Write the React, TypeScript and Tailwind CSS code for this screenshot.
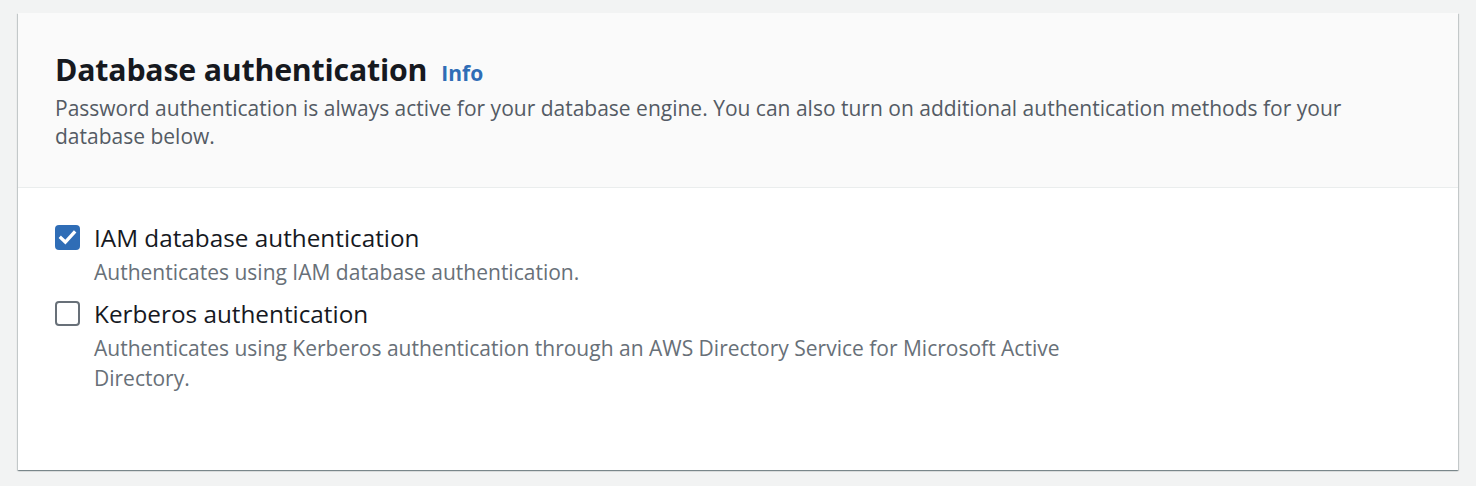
import { useState } from "react";

function Checkbox({ checked, onClick }: { checked: boolean; onClick: () => void }) {
    return (
        <button
            onClick={onClick}
            className={
                checked
                    ? "w-[25px] h-[25px] shrink-0 rounded-[4px] bg-[#2f6db6] flex items-center justify-center"
                    : "w-[25px] h-[25px] shrink-0 rounded-[4px] border-2 border-[#687078] bg-white"
            }
        >
            {checked && (
                <svg width="19" height="19" viewBox="0 0 16 16" fill="none">
                    <path d="M2.5 8.3 L6.2 11.8 L13.5 3.8" stroke="white" strokeWidth="2.8" strokeLinecap="square" strokeLinejoin="miter" />
                </svg>
            )}
        </button>
    );
}

export default function App() {
    const [iam, setIam] = useState(true);
    const [kerberos, setKerberos] = useState(false);

    const options = [
        {
            id: "iam",
            label: "IAM database authentication",
            desc: "Authenticates using IAM database authentication.",
            checked: iam,
            toggle: () => setIam(!iam),
        },
        {
            id: "kerberos",
            label: "Kerberos authentication",
            desc: "Authenticates using Kerberos authentication through an AWS Directory Service for Microsoft Active Directory.",
            checked: kerberos,
            toggle: () => setKerberos(!kerberos),
        },
    ];

    return (
        <div className="min-h-[486px] bg-[#f2f3f3] pt-[13px] px-[18px] font-['Open_Sans',sans-serif]">
            <div className="bg-white h-[457px] shadow-[0_1px_1px_0_rgba(0,28,36,0.3),1px_1px_1px_0_rgba(0,28,36,0.15),-1px_1px_1px_0_rgba(0,28,36,0.15)]">
                <div className="h-[175px] bg-[#fafafa] border-b border-[#eaeded] px-[37px] pt-[35px]">
                    <div className="flex items-baseline gap-[14px]">
                        <h2 className="text-[30.3px] leading-[44px] font-bold text-[#16191f] tracking-[-0.2px]">Database authentication</h2>
                        <a className="text-[21px] font-bold text-[#2f6db6]">Info</a>
                    </div>
                    <p className="text-[21px] leading-[28px] text-[#545b64] max-w-[1310px] mt-[2px]">
                        Password authentication is always active for your database engine. You can also turn on additional authentication methods for your database below.
                    </p>
                </div>
                <div className="px-[37px] pt-[36px] flex flex-col gap-[13px]">
                    {options.map((o) => (
                        <div key={o.id} className="flex gap-[14px]">
                            <div className="pt-[1px]">
                                <Checkbox checked={o.checked} onClick={o.toggle} />
                            </div>
                            <div>
                                <div className="text-[24.3px] leading-[28px] text-[#16191f]">{o.label}</div>
                                <div className="text-[21px] leading-[30px] text-[#687078] max-w-[1000px] mt-[5px]">{o.desc}</div>
                            </div>
                        </div>
                    ))}
                </div>
            </div>
        </div>
    );
}
